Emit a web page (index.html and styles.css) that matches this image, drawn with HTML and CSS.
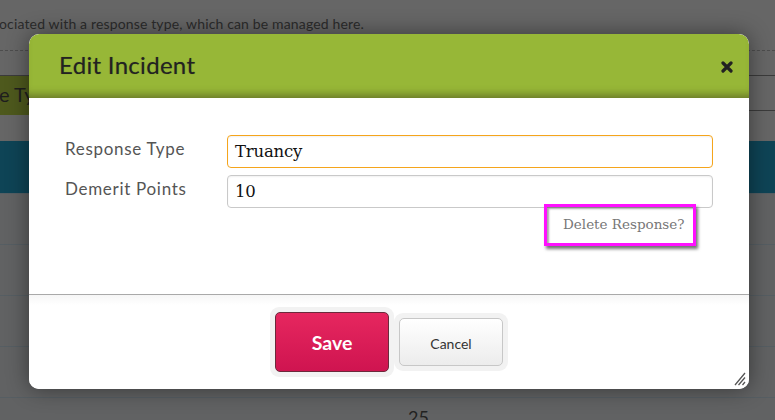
FILE: index.html
```html
<!DOCTYPE html>
<html>
<head>
<meta charset="utf-8">
<link rel="stylesheet" href="styles.css">
</head>
<body>
<div class="page">
  <p class="intro">ociated with a response type, which can be managed here.</p>
  <div class="dash"></div>
  <div class="tabbar"><span class="tab">e Type</span></div>
  <div class="teal"></div>
  <div class="row"></div>
  <div class="row"></div>
  <div class="row"></div>
  <div class="row"></div>
  <div class="row last"><span class="cell"></span><span class="cell num">25</span></div>
</div>

<div class="modal">
  <div class="modal-head">
    <h1 class="title">Edit Incident</h1>
    <svg class="close" width="12" height="12" viewBox="0 0 12 12"><path d="M2 2 L10 10 M10 2 L2 10" stroke="#222" stroke-width="3.2" stroke-linecap="round"/></svg>
  </div>
  <div class="modal-body">
    <div class="form">
      <label class="lbl">Response Type</label>
      <div class="field focus">Truancy</div>
      <label class="lbl">Demerit Points</label>
      <div class="field">10</div>
    </div>
    <div class="del-wrap"><span class="del">Delete Response?</span></div>
  </div>
  <div class="modal-foot">
    <span class="ring"><button class="btn save">Save</button></span>
    <span class="ring"><button class="btn cancel">Cancel</button></span>
    <svg class="grip" width="14" height="14" viewBox="0 0 14 14"><path d="M13 1 L3 13 M13 5.5 L6.5 13 M13 10 L10.5 13" stroke="#555" stroke-width="1.3"/></svg>
  </div>
</div>
</body>
</html>
```
FILE: styles.css
```css
html, body {
  margin: 0;
  padding: 0;
  width: 775px;
  height: 420px;
  overflow: hidden;
  background: #666666;
  font-family: Lato, "Open Sans", sans-serif;
}
.page {
  width: 775px;
  height: 420px;
  overflow: hidden;
}
.intro {
  margin: 0;
  padding: 14px 0 0 0;
  height: 22px;
  line-height: 20px;
  font-size: 14px;
  letter-spacing: 0.15px;
  color: #2b2b2b;
  margin-left: -1px;
  white-space: nowrap;
}
.dash {
  margin-top: 14px;
  border-top: 1px dashed #4d4d4d;
  height: 0;
}
.tabbar {
  margin-top: 24px;
  height: 34px;
  border-top: 1px solid #3b3b3b;
  border-bottom: 1px solid #3b3b3b;
  display: flex;
}
.tab {
  display: block;
  height: 39px;
  width: 150px;
  margin-left: -90px;
  background: #4e591d;
  color: #1e1e1e;
  font-size: 20px;
  line-height: 36px;
  padding-left: 89px;
  box-sizing: border-box;
  white-space: nowrap;
  overflow: hidden;
}
.teal {
  margin-top: 30px;
  height: 52px;
  background: #0e4456;
}
.row {
  height: 50px;
  border-top: 1px solid #565e63;
  background: #616263;
}
.row.last {
  display: flex;
}
.cell {
  width: 395px;
}
.num {
  padding-left: 13px;
  font-size: 18px;
  line-height: 18px;
  padding-top: 10px;
  color: #222;
  width: auto;
}

.modal {
  position: absolute;
  left: 29px;
  top: 34px;
  width: 720px;
  height: 355px;
  background: #fff;
  border-radius: 10px;
  box-shadow: 0 0 22px rgba(0,0,0,0.45);
  display: flex;
  flex-direction: column;
  overflow: hidden;
}
.modal-head {
  height: 64px;
  flex: none;
  background: #97b737;
  box-shadow: inset 0 -9px 8px -6px rgba(60,60,30,0.55);
  display: flex;
  align-items: center;
  padding: 0 16px 0 30px;
  border-radius: 10px 10px 0 0;
}
.title {
  margin: 0 0 4px 0;
  font-size: 24px;
  font-weight: 400;
  letter-spacing: 0.3px;
  color: #222;
  text-shadow: 0 0 1px rgba(0,0,0,0.3);
  flex: 1;
}
.close {
  margin-top: 1px;
}
.modal-body {
  height: 197px;
  flex: none;
  border-bottom: 1px solid #a9a9a9;
  padding: 37px 36px 0 36px;
  box-sizing: border-box;
}
.form {
  display: grid;
  grid-template-columns: 162px 1fr;
  row-gap: 7px;
}
.lbl {
  font-size: 17px;
  letter-spacing: 0.7px;
  color: #555;
  line-height: 20px;
  padding-top: 4px;
}
.field {
  height: 33px;
  box-sizing: border-box;
  border: 1px solid #c9c9c9;
  border-radius: 4px;
  font-family: "DejaVu Serif", "Liberation Serif", serif;
  font-size: 16.5px;
  letter-spacing: -0.2px;
  line-height: 31px;
  padding-left: 7px;
  color: #111;
  box-shadow: inset 0 1px 2px rgba(0,0,0,0.06);
}
.field.focus {
  border-color: #f5a51c;
}
.del-wrap {
  display: flex;
  justify-content: flex-end;
  padding-right: 17px;
  margin-top: -4px;
}
.del {
  display: block;
  width: 152px;
  height: 42px;
  box-sizing: border-box;
  border: 3px solid #ff10ff;
  box-shadow: 2px 3px 3px rgba(0,0,0,0.55), inset 2px 2px 2px rgba(0,0,0,0.35);
  font-family: "DejaVu Serif", "Liberation Serif", serif;
  font-size: 13.5px;
  color: #777;
  line-height: 34px;
  padding-left: 16px;
  white-space: nowrap;
}
.modal-foot {
  flex: 1;
  display: flex;
  justify-content: center;
  align-items: center;
  position: relative;
  background: linear-gradient(#f6f6f6, #fff 10px);
}
.ring {
  display: block;
  padding: 5px;
  background: #f2f2f2;
  border-radius: 9px;
}
.btn {
  display: block;
  font-family: Lato, "Open Sans", sans-serif;
  border-radius: 5px;
  cursor: pointer;
}
.save {
  width: 114px;
  height: 60px;
  background: linear-gradient(#e6275f, #cf1450);
  border: 1px solid #6b2a3b;
  color: #fff;
  font-weight: 700;
  font-size: 19.5px;
  padding-top: 2px;
}
.cancel {
  width: 104px;
  height: 48px;
  background: linear-gradient(#ffffff, #ececec);
  border: 1px solid #c7c7c7;
  color: #333;
  font-size: 14px;
  padding-top: 4px;
}
.grip {
  position: absolute;
  right: 3px;
  bottom: 3px;
}
```
